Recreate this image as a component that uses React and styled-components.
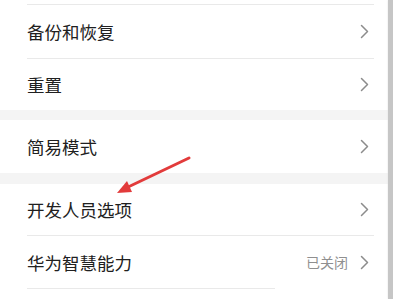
import React from "react";
import styled, { createGlobalStyle } from "styled-components";

const GlobalStyle = createGlobalStyle`
    html, body {
        margin: 0;
        padding: 0;
        background: #ffffff;
    }
    body {
        font-family: "Noto Sans CJK SC", "Noto Sans", sans-serif;
    }
`;

const items = [
    { group: 0, label: "备份和恢复" },
    { group: 0, label: "重置" },
    { group: 1, label: "简易模式" },
    { group: 2, label: "开发人员选项" },
    { group: 2, label: "华为智慧能力", value: "已关闭" },
];

const heights = [53, 51, 53, 51, 52];

function Chevron() {
    return (
        <svg width="9" height="15" viewBox="0 0 9 15">
            <path
                d="M1.5 1.5 L7.5 7.5 L1.5 13.5"
                fill="none"
                stroke="#8c8c8c"
                strokeWidth="1.5"
                strokeLinecap="round"
                strokeLinejoin="round"
            />
        </svg>
    );
}

function Arrow() {
    return (
        <ArrowLayer width="400" height="299" viewBox="0 0 400 299">
            <line
                x1="189"
                y1="158"
                x2="126"
                y2="188"
                stroke="#e23b3b"
                strokeWidth="3"
                strokeLinecap="round"
            />
            <polygon points="117,193 127,181 132,192" fill="#e23b3b" />
        </ArrowLayer>
    );
}

export default function App() {
    const rows = [];
    items.forEach((item, i) => {
        const prev = items[i - 1];
        if (prev && prev.group !== item.group) {
            rows.push(<Band key={"band" + i} tall={i === 3} />);
        } else if (prev) {
            rows.push(<Divider key={"div" + i} />);
        }
        rows.push(
            <Row key={item.label} h={heights[i]}>
                <Label>{item.label}</Label>
                <Right>
                    {item.value && <Value>{item.value}</Value>}
                    <Chevron />
                </Right>
            </Row>
        );
    });

    return (
        <Screen>
            <GlobalStyle />
            <Content>
                <TopSpace />
                <Divider />
                {rows}
                <Divider short />
            </Content>
            <ScrollEdge />
            <Outside />
            <Arrow />
        </Screen>
    );
}

const Screen = styled.div`
    position: relative;
    width: 400px;
    height: 299px;
    overflow: hidden;
    display: flex;
    background: #ffffff;
`;
const Content = styled.div`
    width: 388px;
    display: flex;
    flex-direction: column;
`;
const TopSpace = styled.div`
    height: 4px;
`;
const Divider = styled.div`
    height: 1px;
    background: #e9e9e9;
    margin-left: 27px;
    margin-right: ${(props) => (props.short ? "113px" : "14px")};
    flex-shrink: 0;
`;
const Band = styled.div`
    height: ${(props) => (props.tall ? "11px" : "10px")};
    background: #f4f4f4;
    flex-shrink: 0;
`;
const Row = styled.div`
    height: ${(props) => props.h}px;
    flex-shrink: 0;
    display: flex;
    align-items: center;
    justify-content: space-between;
    padding: 0 19px 0 27px;
`;
const Label = styled.span`
    font-size: 17.5px;
    color: #202020;
    letter-spacing: 0;
`;
const Right = styled.div`
    display: flex;
    align-items: center;
    gap: 12px;
`;
const Value = styled.span`
    font-size: 14px;
    color: #8f8f8f;
`;
const ScrollEdge = styled.div`
    width: 5px;
    background: #c6c6c6;
    box-shadow: 0 0 2px #dddddd;
`;
const Outside = styled.div`
    flex: 1;
    background: #ffffff;
`;
const ArrowLayer = styled.svg`
    position: absolute;
    left: 0;
    top: 0;
    pointer-events: none;
`;
